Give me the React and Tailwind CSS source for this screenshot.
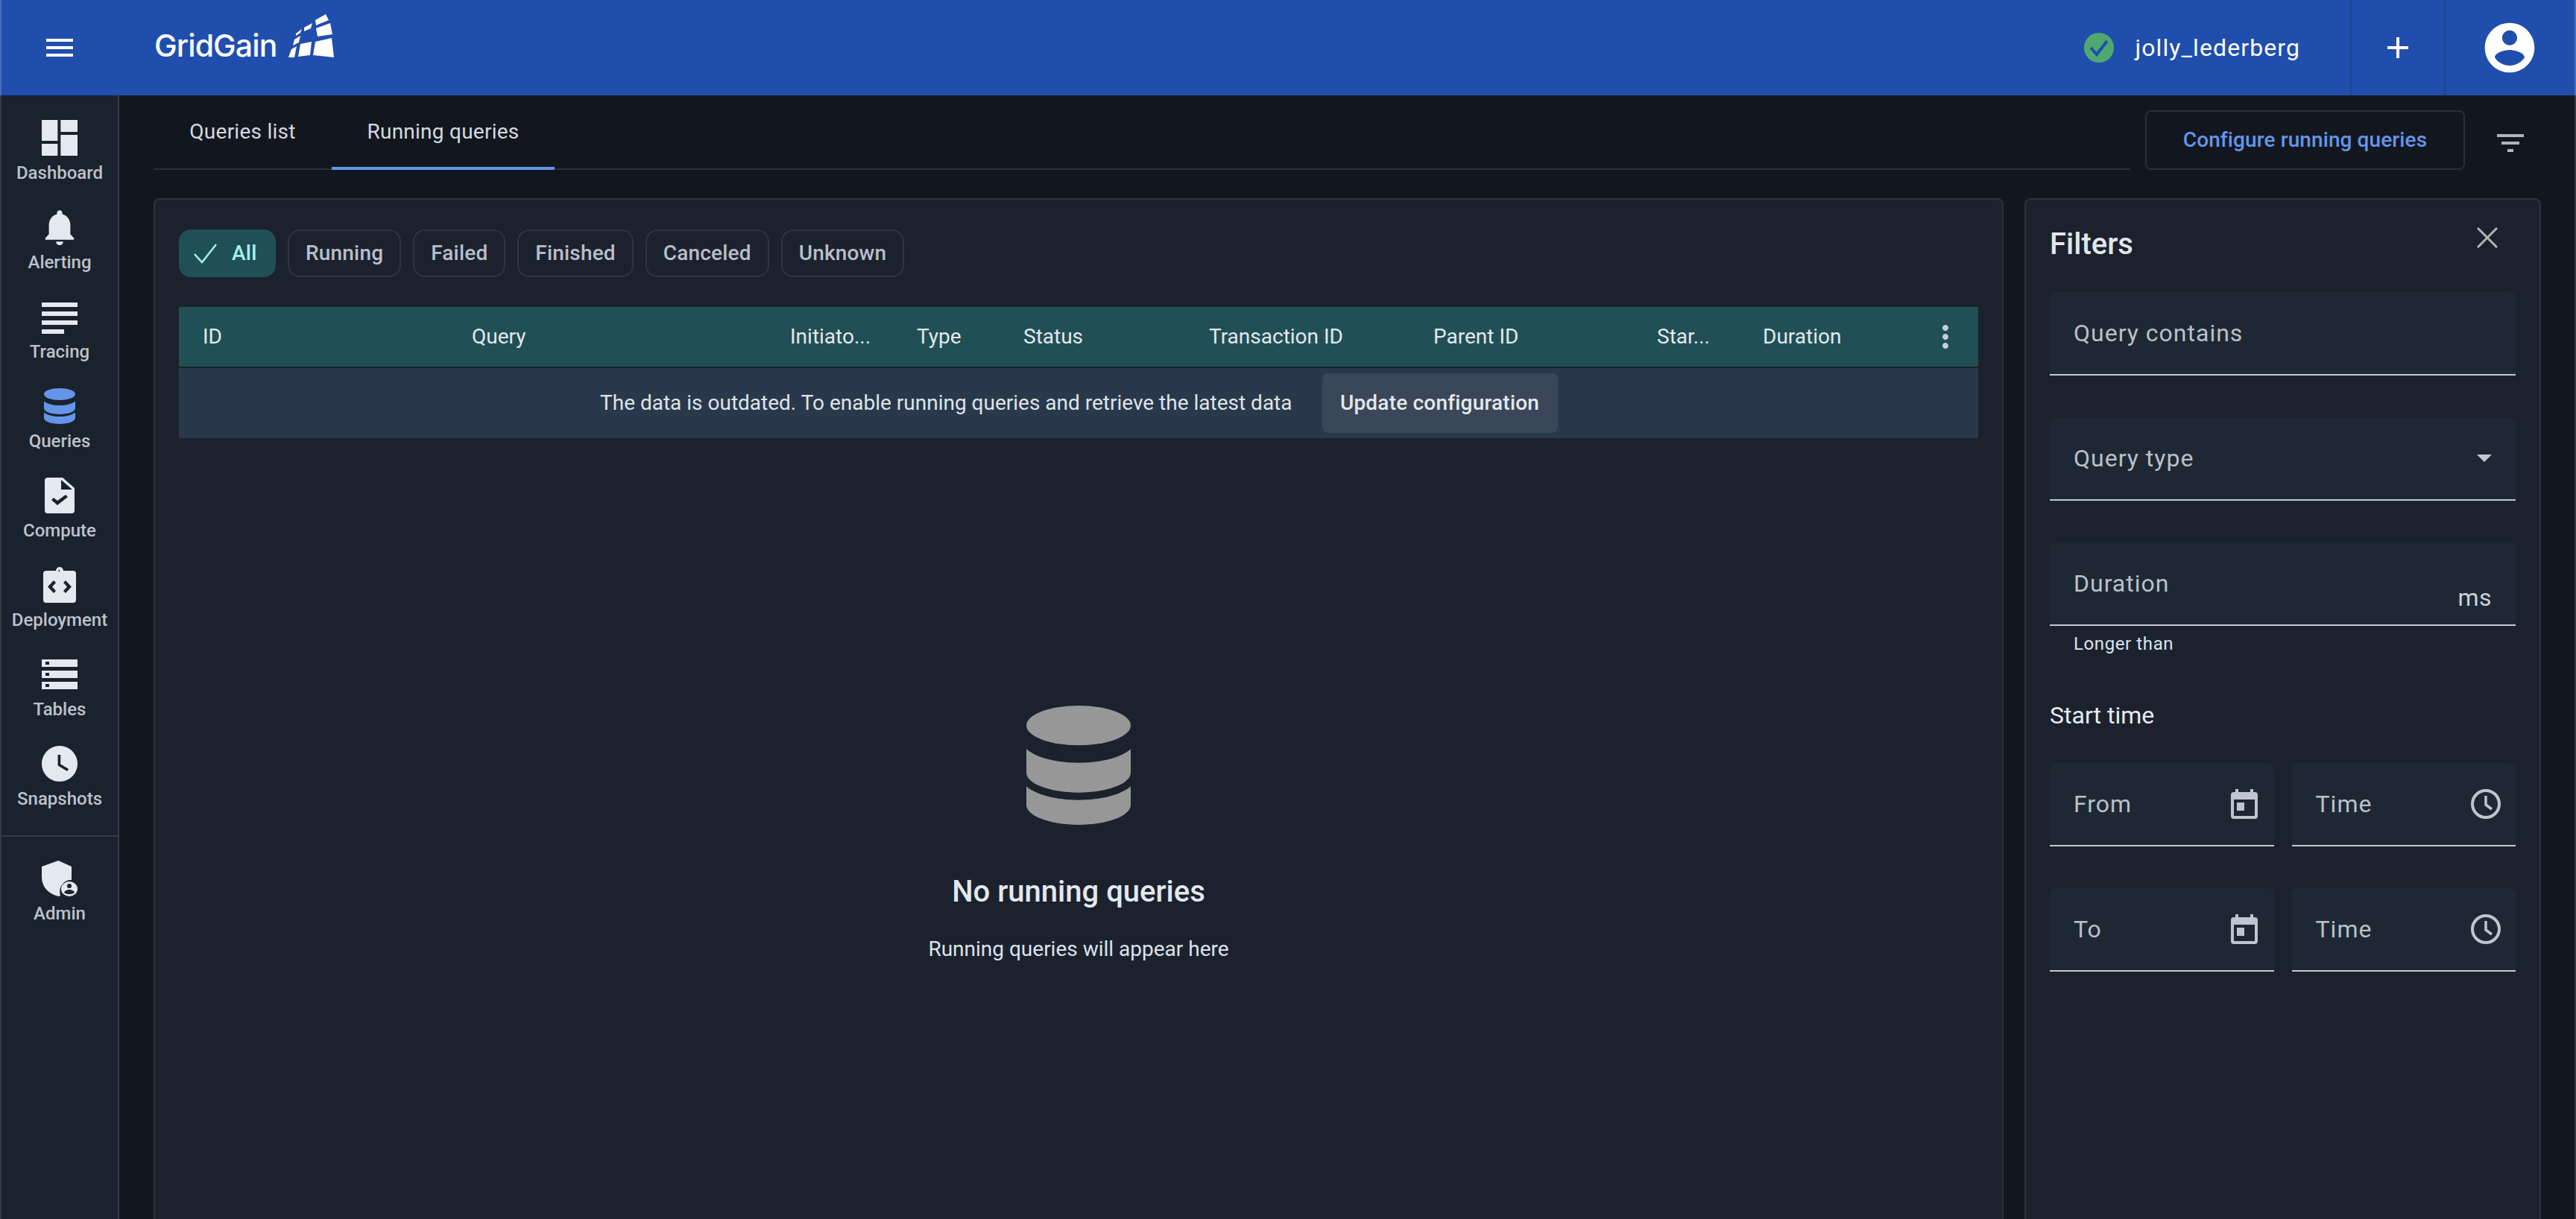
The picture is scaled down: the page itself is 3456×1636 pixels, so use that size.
const ROBOTO = "font-['Roboto',sans-serif]";

const navItems = [
  {
    label: 'Dashboard',
    svg: (
      <svg viewBox="3 3 18 18" className="h-[48px] w-[48px]" fill="#e4e8ef">
        <path d="M3 3h8v10.5H3zM12.500 3H21v6h-8.500zM12.500 10.500H21V21h-8.500zM3 15h8v6H3z" />
      </svg>
    ),
  },
  {
    label: 'Alerting',
    svg: (
      <svg viewBox="2 2 20 20" className="h-[48px] w-[48px]" fill="#e4e8ef">
        <path d="M12 22c1.100 0 2-.9 2-2h-4c0 1.100.9 2 2 2zm6-6v-5c0-3.070-1.630-5.640-4.500-6.320V4c0-.83-.67-1.500-1.500-1.500s-1.500.67-1.500 1.500v.68C7.640 5.360 6 7.920 6 11v5l-2 2v1h16v-1l-2-2z" />
      </svg>
    ),
  },
  {
    label: 'Tracing',
    svg: (
      <svg viewBox="0 0 48 42" className="mt-[5px] h-[42px] w-[48px]" fill="#e4e8ef">
        <path d="M0 0h48v6H0zM0 12h48v6H0zM0 24h48v6H0zM0 36h30v6H0z" />
      </svg>
    ),
  },
  {
    label: 'Queries',
    svg: <DbIcon className="h-[48px] w-[42px]" fill="#6495e8" />,
  },
  {
    label: 'Compute',
    svg: (
      <svg viewBox="0 0 40 48" className="h-[48px] w-[40px]" fill="#e4e8ef">
        <path
          fillRule="evenodd"
          d="M4 0h20l16 14v30a4 4 0 0 1-4 4H4a4 4 0 0 1-4-4V4a4 4 0 0 1 4-4zM22 3v13h15zM9 30l3-3 5 4 11-8 3 3-14 11z"
        />
      </svg>
    ),
  },
  {
    label: 'Deployment',
    svg: (
      <svg viewBox="0 0 44 48" className="h-[48px] w-[44px]" fill="#e4e8ef">
        <path
          fillRule="evenodd"
          d="M4 5h13a5 5 0 0 1 10 0h13a4 4 0 0 1 4 4v35a4 4 0 0 1-4 4H4a4 4 0 0 1-4-4V9a4 4 0 0 1 4-4zM22 3.500a1.500 1.500 0 1 0 .01 3zM14 18l-8 8.500 8 8.500 3-3-5-5.500 5-5.500zM30 18l-3 3 5 5.500-5 5.500 3 3 8-8.500z"
        />
      </svg>
    ),
  },
  {
    label: 'Tables',
    svg: (
      <svg viewBox="0 0 48 40" className="mt-[4px] h-[40px] w-[48px]" fill="#e4e8ef">
        <path
          fillRule="evenodd"
          d="M0 0h48v10H0zM5 3v4h5V3zM0 15h48v10H0zM5 18v4h5v-4zM0 30h48v10H0zM5 33v4h5v-4z"
        />
      </svg>
    ),
  },
  {
    label: 'Snapshots',
    svg: (
      <svg viewBox="2 2 20 20" className="h-[48px] w-[48px]" fill="#e4e8ef">
        <path d="M12 2C6.500 2 2 6.500 2 12s4.500 10 10 10 10-4.500 10-10S17.500 2 12 2zm4.200 14.200L11 13V7h1.500v5.200l4.500 2.700-.8 1.300z" />
      </svg>
    ),
  },
];

function DbIcon({ className, fill }) {
  return (
    <svg viewBox="0 0 42 48" className={className} fill={fill}>
      <ellipse cx="21" cy="8" rx="21" ry="8" fill={fill} />
      <path d="M0 17.500C4 21 12 23 21 23s17-2 21-5.500V27c0 4.400-9.400 8-21 8S0 31.400 0 27z" />
      <path d="M0 32.500C4 36 12 38 21 38s17-2 21-5.500V40c0 4.400-9.400 8-21 8S0 44.400 0 40z" />
    </svg>
  );
}

const chips = ['Running', 'Failed', 'Finished', 'Canceled', 'Unknown'];

const columns = [
  'ID',
  'Query',
  'Initiato...',
  'Type',
  'Status',
  'Transaction ID',
  'Parent ID',
  'Star...',
  'Duration',
];

const CalendarIcon = () => (
  <svg viewBox="0 0 36 40" className="h-[40px] w-[36px]" fill="#bfc5cf">
    <path
      fillRule="evenodd"
      d="M6 0h4v4h16V0h4v4h2a4 4 0 0 1 4 4v28a4 4 0 0 1-4 4H4a4 4 0 0 1-4-4V8a4 4 0 0 1 4-4h2zM4 14v22h28V14zM8 18h10v11H8z"
    />
  </svg>
);

const ClockIcon = () => (
  <svg viewBox="0 0 40 40" className="h-[40px] w-[40px]" fill="none" stroke="#bfc5cf" strokeWidth="4">
    <circle cx="20" cy="20" r="18" />
    <path d="M20 9v12l8 6" strokeWidth="3.500" />
  </svg>
);

function Field({ label, className = '', children }) {
  return (
    <div
      className={`relative flex h-[112px] items-center justify-between rounded-t-[8px] border-b-2 border-[#c3c8d1] bg-[#1e2834] pl-[32px] ${className}`}
    >
      <span className="text-[32px] tracking-[1px] text-[#b9c0ca]">{label}</span>
      {children}
    </div>
  );
}

export default function App() {
  return (
    <div className={`flex h-[1636px] flex-col overflow-hidden bg-[#12171f] ${ROBOTO}`}>
      {/* Top bar */}
      <header className="flex h-[128px] shrink-0 items-center border-x-2 border-[#4a6db8] bg-[#204ead]">
        <button className="ml-[54px] flex h-[48px] w-[48px] items-center justify-center">
          <svg viewBox="0 0 24 24" className="h-[48px] w-[48px]" fill="#fff">
            <path d="M3 18h18v-2H3v2zm0-5h18v-2H3v2zm0-7v2h18V6H3z" />
          </svg>
        </button>
        <div className="mb-[32px] ml-[103px] flex h-[58px] items-end">
          <span className="-mb-[8px] w-[171px] font-['Inter',sans-serif] text-[41px] leading-[48px] font-medium tracking-[-.9px] whitespace-nowrap text-white">
            GridGain
          </span>
          <svg viewBox="0 0 61 58" className="ml-[9px] h-[58px] w-[61px]" fill="#fff">
            <path d="M36 8L50 0l4 8-17 7zM37 19l19-7 3 15-20 3zM36 37l22-5 3 26-28-3zM21 18l11-6-2 7-9 4zM16 40l15-3-2 18-16 2zM10 26l8-6-2 5-6 4zM8 34l8-5-2 9-8 4zM4 47l7-4-3 15H0z" />
          </svg>
        </div>
        <div className="ml-auto flex h-full items-center">
          <svg viewBox="0 0 40 40" className="h-[40px] w-[40px]">
            <circle cx="20" cy="20" r="20" fill="#4fa96f" />
            <path d="M9 20l8 9 14-18" fill="none" stroke="#204ead" strokeWidth="4" />
          </svg>
          <span className="mr-[67px] ml-[28px] text-[32px] tracking-[1.100px] text-white">jolly_lederberg</span>
          <div className="flex h-full w-[126px] items-center justify-center border-l-2 border-[#1c4592]">
            <svg viewBox="0 0 24 24" className="h-[48px] w-[48px]" fill="#fff">
              <path d="M19 13h-6v6h-2v-6H5v-2h6V5h2v6h6v2z" />
            </svg>
          </div>
          <div className="flex h-full w-[175px] items-center justify-center border-l-2 border-[#1c4592] pr-[2px]">
            <svg viewBox="0 0 24 24" className="h-[80px] w-[80px]" fill="#fff">
              <path d="M12 2C6.480 2 2 6.480 2 12s4.480 10 10 10 10-4.480 10-10S17.520 2 12 2zm0 3c1.660 0 3 1.340 3 3s-1.340 3-3 3-3-1.340-3-3 1.340-3 3-3zm0 14.200c-2.500 0-4.710-1.280-6-3.220.03-1.990 4-3.080 6-3.080 1.990 0 5.970 1.090 6 3.080-1.290 1.940-3.500 3.220-6 3.220z" />
            </svg>
          </div>
        </div>
      </header>

      <div className="flex min-h-0 flex-1 border-x-2 border-[#333a46]">
        {/* Left nav */}
        <nav className="w-[158px] shrink-0 border-r-2 border-[#333a46] bg-[#1a222d] pt-[33px]">
          {navItems.map((item) => (
            <div key={item.label} className="flex h-[120px] flex-col items-center">
              <div className="flex h-[48px] items-start">{item.svg}</div>
              <span className="mt-[7px] text-[24px] leading-[32px] font-medium text-[#bcc2cc]">{item.label}</span>
            </div>
          ))}
          <div className="flex h-[154px] flex-col items-center border-t-2 border-[#333a46] pt-[32px]">
            <svg viewBox="0 0 48 48" className="h-[48px] w-[48px]" fill="#e4e8ef">
              <path d="M24 0L0 8v14c0 12 8 22 24 26 1-.3 2-.6 3-1a13 13 0 0 1-1-5c0-9 7-16 16-16 .7 0 1 0 1 .1V8z" transform="scale(.93 1)" />
              <ellipse cx="37" cy="38" rx="11" ry="10" />
              <circle cx="37" cy="34" r="3" fill="#1a222d" />
              <path d="M30 43c1-3 4-4 7-4s6 1 7 4c-2 1.500-4 2-7 2s-5-.5-7-2z" fill="#1a222d" />
            </svg>
            <span className="mt-[7px] text-[24px] leading-[32px] font-medium text-[#bcc2cc]">Admin</span>
          </div>
        </nav>

        {/* Page content */}
        <main className="min-w-0 flex-1 pl-[46px]">
          <div className="flex h-[138px] items-start">
            <div className="mt-[20px] flex h-[80px] w-[2652px] items-end border-b-2 border-[#2a2f38]">
              <div className="flex h-[78px] w-[239px] items-center justify-center pb-[21px] text-[28px] tracking-[.25px] text-[#d5d9e0]">
                Queries list
              </div>
              <div className="-mb-[2px] flex h-[80px] w-[299px] items-center justify-center border-b-4 border-[#6495e8] pb-[19px] text-[28px] tracking-[.25px] text-[#d5d9e0]">
                Running queries
              </div>
            </div>
            <button className="mt-[20px] ml-[20px] h-[80px] w-[429px] rounded-[8px] border-2 border-[#2a2f38] text-[28px] font-medium tracking-[.1px] text-[#6495e8]">
              Configure running queries
            </button>
            <svg viewBox="0 0 36 24" className="mt-[52px] ml-[43px] h-[24px] w-[36px]" fill="#b0b5bc">
              <path d="M0 0h36v4H0zM6 10h24v4H6zM14 20h8v4h-8z" />
            </svg>
          </div>

          <div className="flex items-start gap-[28px]">
            {/* Running queries panel */}
            <section className="h-[1500px] w-[2482px] shrink-0 rounded-[8px] border-2 border-[#2a323d] bg-[#1b222e] px-[32px] pt-[40px]">
              <div className="flex gap-[16px]">
                <div className="flex h-[64px] w-[130px] items-center rounded-[16px] bg-[#1f5055] pl-[20px]">
                  <svg viewBox="0 0 32 28" className="h-[28px] w-[32px]" fill="none" stroke="#a8f0ef" strokeWidth="2.500">
                    <path d="M1 15l10 11L30 2" />
                  </svg>
                  <span className="ml-[19px] text-[28px] font-medium tracking-[.3px] text-[#a8f0ef]">All</span>
                </div>
                {chips.map((chip) => (
                  <div
                    key={chip}
                    className="flex h-[64px] items-center rounded-[16px] border-2 border-[#2e3440] px-[22px] text-[28px] font-medium tracking-[.175px] text-[#b9bec9]"
                  >
                    {chip}
                  </div>
                ))}
              </div>

              <div className="mt-[40px] grid h-[80px] grid-cols-[361px_427px_170px_143px_249px_301px_300px_142px_240px_1fr] items-center bg-[#205055] text-[28px] text-[#e3e8ee]">
                {columns.map((col) => (
                  <div key={col} className="pl-[32px] whitespace-nowrap">
                    {col}
                  </div>
                ))}
                <div className="flex justify-end pr-[20px]">
                  <svg viewBox="0 0 24 24" className="h-[48px] w-[48px]" fill="#c9ced6">
                    <path d="M12 8c1.100 0 2-.9 2-2s-.9-2-2-2-2 .9-2 2 .9 2 2 2zm0 2c-1.100 0-2 .9-2 2s.9 2 2 2 2-.9 2-2-.9-2-2-2zm0 6c-1.100 0-2 .9-2 2s.9 2 2 2 2-.9 2-2-.9-2-2-2z" />
                  </svg>
                </div>
              </div>
              <div className="mt-[2px] flex h-[94px] items-center bg-[#29394b] pl-[565px] text-[28px] text-[#dfe4ea]">
                <span>The data is outdated. To enable running queries and retrieve the latest data</span>
                <button className="ml-[40px] h-[80px] w-[316px] rounded-[8px] bg-[#3a4758] text-[28px] font-medium tracking-[.2px] text-[#e3e8ee]">
                  Update configuration
                </button>
              </div>

              <div className="mt-[359px] flex flex-col items-center">
                <DbIcon className="h-[160px] w-[140px]" fill="#979797" />
                <h2 className="mt-[64px] text-[40px] leading-[52px] font-medium text-[#e3e8f0]">No running queries</h2>
                <p className="mt-[31px] text-[28px] leading-[40px] text-[#dde2ea]">
                  Running queries will appear here
                </p>
              </div>
            </section>

            {/* Filters panel */}
            <aside className="h-[1500px] w-[693px] shrink-0 rounded-[8px] border-2 border-[#2a323d] bg-[#1b222e] px-[32px]">
              <div className="flex h-[124px] items-center justify-between">
                <h3 className="-mt-[5px] text-[40px] leading-[48px] font-medium text-[#e3e6ec]">Filters</h3>
                <svg viewBox="0 0 28 28" className="mr-[24px] mb-[22px] h-[28px] w-[28px]" fill="none" stroke="#b4b4b4" strokeWidth="3">
                  <path d="M1 1l26 26M27 1L1 27" />
                </svg>
              </div>
              <div className="flex flex-col gap-[56px]">
                <Field label="Query contains" />
                <Field label="Query type">
                  <svg viewBox="0 0 20 10" className="mr-[32px] h-[10px] w-[20px]" fill="#c3c8d1">
                    <path d="M0 0h20L10 10z" />
                  </svg>
                </Field>
                <div>
                  <Field label="Duration">
                    <span className="mt-[38px] mr-[32px] text-[32px] tracking-[.5px] text-[#cdd2da]">ms</span>
                  </Field>
                  <p className="mt-[8px] pl-[32px] text-[24px] leading-[32px] tracking-[.6px] text-[#dfe3ea]">Longer than</p>
                </div>
              </div>
              <h4 className="mt-[60px] text-[32px] leading-[40px] text-[#e8ecf2]">Start time</h4>
              <div className="mt-[44px] grid grid-cols-2 gap-x-[24px] gap-y-[56px]">
                <Field label="From">
                  <div className="mr-[22px] flex">
                    <CalendarIcon />
                  </div>
                </Field>
                <Field label="Time">
                  <div className="mr-[20px] flex">
                    <ClockIcon />
                  </div>
                </Field>
                <Field label="To">
                  <div className="mr-[22px] flex">
                    <CalendarIcon />
                  </div>
                </Field>
                <Field label="Time">
                  <div className="mr-[20px] flex">
                    <ClockIcon />
                  </div>
                </Field>
              </div>
            </aside>
          </div>
        </main>
      </div>
    </div>
  );
}
